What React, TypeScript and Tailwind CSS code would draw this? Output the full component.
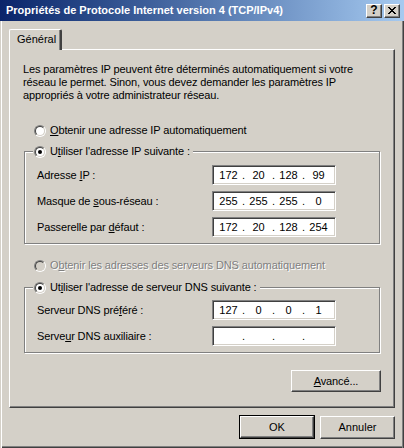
import React from "react";

const FONT = "font-['Liberation_Sans',Arial,sans-serif]";

function Radio({ checked, disabled }: { checked?: boolean; disabled?: boolean }) {
  return (
    <span className="w-[12px] h-[12px] rounded-full border border-t-[#808080] border-l-[#808080] border-b-white border-r-white flex items-center justify-center shrink-0">
      <span
        className={`w-[10px] h-[10px] rounded-full border border-t-[#404040] border-l-[#404040] border-b-[#d4d0c8] border-r-[#d4d0c8] flex items-center justify-center ${
          disabled ? "bg-[#d4d0c8]" : "bg-white"
        }`}
      >
        {checked && <span className="w-[4px] h-[4px] rounded-full bg-black" />}
      </span>
    </span>
  );
}

function IpField({ parts }: { parts: string[] }) {
  return (
    <div className="w-[124px] h-[20px] bg-white border border-t-[#808080] border-l-[#808080] border-b-white border-r-white shadow-[inset_1px_1px_0_#404040,inset_-1px_-1px_0_#d4d0c8] flex items-center pl-[2px] tracking-normal">
      {parts.map((p, i) => (
        <React.Fragment key={i}>
          <span className="w-[27px] text-center leading-[13px]">{p}</span>
          {i < 3 && <span className="w-[3px] text-center leading-[13px]">.</span>}
        </React.Fragment>
      ))}
    </div>
  );
}

function Row({ label, parts }: { label: React.ReactNode; parts: string[] }) {
  return (
    <div className="flex items-center h-[20px]">
      <span className="w-[175px] leading-[13px]">{label}</span>
      <IpField parts={parts} />
    </div>
  );
}

function Group({ legend, children }: { legend: React.ReactNode; children: React.ReactNode }) {
  return (
    <div className="relative ml-[14px] w-[356px] border border-[#808080] shadow-[inset_1px_1px_0_#fff,1px_1px_0_#fff]">
      <div className="absolute left-[8px] top-[-7px] flex items-center gap-[4px] bg-[#d4d0c8] pl-[1px] pr-[3px] h-[13px]">
        {legend}
      </div>
      {children}
    </div>
  );
}

function Button({ children, isDefault, className = "" }: { children: React.ReactNode; isDefault?: boolean; className?: string }) {
  const inner = (
    <div className="w-full h-full flex items-center justify-center border border-t-white border-l-white border-r-[#404040] border-b-[#404040] shadow-[inset_-1px_-1px_0_#808080] leading-[13px]">
      {children}
    </div>
  );
  return (
    <div className={`${className} ${isDefault ? "border border-black" : ""}`}>{inner}</div>
  );
}

export default function App() {
  return (
    <div
      className={`${FONT} text-[11px] text-black w-[404px] h-[448px] bg-[#d4d0c8] flex flex-col shadow-[inset_1px_0_0_#d4d0c8,inset_2px_0_0_#fff,inset_-1px_0_0_#404040,inset_-2px_0_0_#808080,inset_0_-1px_0_#404040,inset_0_-2px_0_#808080] overflow-hidden`}
    >
      {/* Title bar */}
      <div className="h-[21px] shrink-0 flex items-center bg-gradient-to-r from-[#0a246a] to-[#a6caf0] pl-[6px] pr-[4px]">
        <span className="font-bold text-white leading-[13px] flex-1 whitespace-nowrap">
          Propriétés de Protocole Internet version 4 (TCP/IPv4)
        </span>
        <div className="flex items-center">
          <div className="w-[16px] h-[14px] bg-[#d4d0c8] border border-t-white border-l-white border-r-[#404040] border-b-[#404040] shadow-[inset_-1px_-1px_0_#808080] flex items-center justify-center">
            <span className="font-bold text-[12px] leading-[11px] text-black">?</span>
          </div>
          <div className="ml-[2px] w-[16px] h-[14px] bg-[#d4d0c8] border border-t-white border-l-white border-r-[#404040] border-b-[#404040] shadow-[inset_-1px_-1px_0_#808080] flex items-center justify-center">
            <svg width="8" height="7" viewBox="0 0 8 7" shapeRendering="crispEdges">
              <path d="M0 0h2v1H0zM6 0h2v1H6zM1 1h2v1H1zM5 1h2v1H5zM2 2h4v1H2zM3 3h2v1H3zM2 4h4v1H2zM1 5h2v1H1zM5 5h2v1H5zM0 6h2v1H0zM6 6h2v1H6z" fill="#000" />
            </svg>
          </div>
        </div>
      </div>

      {/* Tab */}
      <div className="mt-[8px] ml-[9px] flex">
        <div className="relative z-10 w-[53px] h-[21px] mb-[-1px] bg-[#d4d0c8] border-t border-l border-t-white border-l-white border-r-2 border-r-[#404040] rounded-tl-[2px] rounded-tr-[2px] shadow-[inset_-1px_0_0_#808080] pl-[7px] pt-[3px] leading-[13px]">
          Général
        </div>
      </div>

      {/* Panel */}
      <div className="ml-[9px] w-[386px] h-[359px] border border-t-white border-l-white border-r-[#404040] border-b-[#404040] shadow-[inset_-1px_-1px_0_#808080] flex flex-col tracking-[-0.12px]">
        <p className="mt-[13px] ml-[13px] leading-[13px] whitespace-nowrap">
          Les paramètres IP peuvent être déterminés automatiquement si votre
          <br />
          réseau le permet. Sinon, vous devez demander les paramètres IP
          <br />
          appropriés à votre administrateur réseau.
        </p>

        <div className="mt-[22px] ml-[24px] flex items-center gap-[4px] h-[13px]">
          <Radio />
          <span className="leading-[13px]">
            <u>O</u>btenir une adresse IP automatiquement
          </span>
        </div>

        <div className="mt-[14px]">
          <Group
            legend={
              <>
                <Radio checked />
                <span className="leading-[13px]">
                  U<u>t</u>iliser l'adresse IP suivante :
                </span>
              </>
            }
          >
            <div className="pt-[13px] pb-[6px] pl-[12px] flex flex-col gap-[6px]">
              <Row label={<>Adresse <u>I</u>P :</>} parts={["172", "20", "128", "99"]} />
              <Row label={<>Masque de <u>s</u>ous-réseau :</>} parts={["255", "255", "255", "0"]} />
              <Row label={<>Passerelle par <u>d</u>éfaut :</>} parts={["172", "20", "128", "254"]} />
            </div>
          </Group>
        </div>

        <div className="mt-[15px] ml-[24px] flex items-center gap-[4px] h-[13px] text-[#808080] [text-shadow:1px_1px_0_#fff]">
          <Radio disabled />
          <span className="leading-[13px]">
            O<u>b</u>tenir les adresses des serveurs DNS automatiquement
          </span>
        </div>

        <div className="mt-[15px]">
          <Group
            legend={
              <>
                <Radio checked />
                <span className="leading-[13px]">
                  Ut<u>i</u>liser l'adresse de serveur DNS suivante :
                </span>
              </>
            }
          >
            <div className="pt-[12px] pb-[6px] pl-[12px] flex flex-col gap-[6px]">
              <Row label={<>Serveur DNS pré<u>f</u>éré :</>} parts={["127", "0", "0", "1"]} />
              <Row label={<>Serve<u>u</u>r DNS auxiliaire :</>} parts={["", "", "", ""]} />
            </div>
          </Group>
        </div>

        <div className="mt-[17px] flex justify-end pr-[13px]">
          <Button className="w-[90px] h-[22px]">
            <span>
              <u>A</u>vancé...
            </span>
          </Button>
        </div>
      </div>

      {/* Bottom buttons */}
      <div className="mt-[7px] flex justify-end gap-[5px] pr-[9px]">
        <Button isDefault className="w-[76px] h-[24px]">
          OK
        </Button>
        <Button className="w-[75px] h-[23px] mt-[1px]">Annuler</Button>
      </div>
    </div>
  );
}
